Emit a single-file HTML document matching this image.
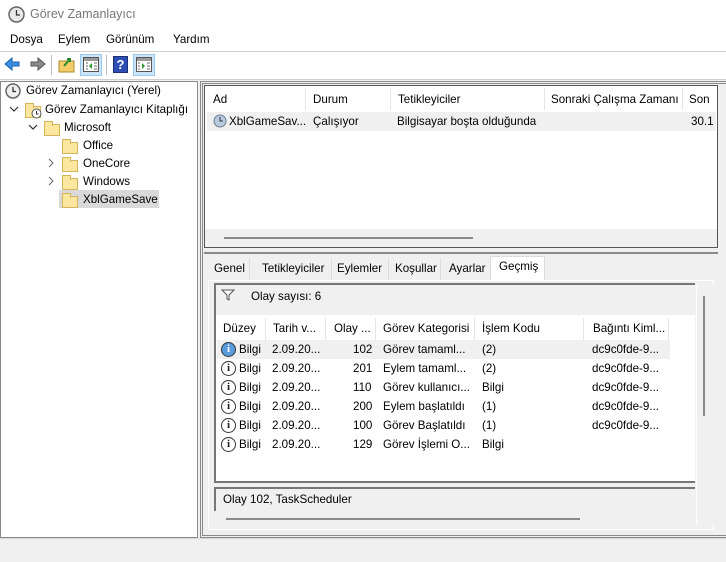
<!DOCTYPE html>
<html><head><meta charset="utf-8"><style>
*{margin:0;padding:0;box-sizing:border-box}
body{width:726px;height:562px;background:#f0f0f0;font-family:"Liberation Sans",sans-serif;font-size:11.6px;color:#000;position:relative;overflow:hidden}
.a{position:absolute;white-space:nowrap}
.fold{position:absolute;width:16px;height:12px;background:#fbe7a0;border:1px solid #d6b45a}
.fold:before{content:"";position:absolute;left:-1px;top:-4px;width:7px;height:4px;background:#fbe7a0;border:1px solid #d6b45a;border-bottom:none}
.info{position:absolute;width:15px;height:15px;border-radius:50%;border:1px solid #333;background:#fff;font:bold 11px "Liberation Serif",serif;text-align:center;line-height:13px;color:#222}
.hd{position:absolute;top:0;height:22px;border-right:1px solid #e5e5e5;overflow:hidden}
</style></head><body>
<div class="a" style="left:0;top:0;width:726px;height:51px;background:#fff"></div>
<svg class="a" style="left:8px;top:6px" width="17" height="17"><circle cx="8.5" cy="8.5" r="7.5" fill="#e8e8e8" stroke="#666" stroke-width="1.5"/><path d="M8.5 4v5h3.5" stroke="#333" stroke-width="1.3" fill="none"/></svg>
<div class="a" style="left:30px;top:7px;color:#777;font-size:12.5px">Görev Zamanlayıcı</div>
<div class="a" style="left:10px;top:33px">Dosya</div>
<div class="a" style="left:58px;top:33px">Eylem</div>
<div class="a" style="left:106px;top:33px">Görünüm</div>
<div class="a" style="left:173px;top:33px">Yardım</div>
<div class="a" style="left:0;top:51px;width:726px;height:1px;background:#d0d0d0"></div>
<div class="a" style="left:0;top:52px;width:726px;height:27px;background:#fff"></div>
<svg class="a" style="left:4px;top:56px" width="42" height="16"><path d="M1 8l7-6v4h7v4h-7v4z" fill="#3a8ee6" stroke="#1d5fa8"/><path d="M41 8l-7-6v4h-7v4h7v4z" fill="#8a8a8a" stroke="#555"/></svg>
<div class="a" style="left:51px;top:55px;width:1px;height:20px;background:#bbb"></div>
<svg class="a" style="left:58px;top:56px" width="18" height="17"><rect x="1" y="5" width="15" height="11" fill="#f2cd6a" stroke="#b08a30"/><path d="M6 10l6-7M9 3h3v3" stroke="#2a8a2a" stroke-width="2" fill="none"/></svg>
<div class="a" style="left:80px;top:54px;width:22px;height:22px;background:#cce4f7;border:1px solid #99c9ef"></div>
<svg class="a" style="left:83px;top:57px" width="16" height="15"><rect x=".5" y=".5" width="15" height="14" fill="#fff" stroke="#555"/><rect x="1" y="1" width="14" height="3" fill="#999"/><path d="M9 6l-3 3 3 3z" fill="#2a9a2a"/><path d="M3 6h2M3 9h2M3 12h2M11 6h3M11 9h3M11 12h3" stroke="#666"/></svg>
<div class="a" style="left:106px;top:55px;width:1px;height:20px;background:#bbb"></div>
<div class="a" style="left:113px;top:56px;width:15px;height:17px;background:#2d4fb3;border:1px solid #1b2f77;color:#fff;font-weight:bold;font-size:13px;text-align:center;line-height:15px">?</div>
<div class="a" style="left:133px;top:54px;width:22px;height:22px;background:#cce4f7;border:1px solid #99c9ef"></div>
<svg class="a" style="left:136px;top:57px" width="16" height="15"><rect x=".5" y=".5" width="15" height="14" fill="#fff" stroke="#555"/><rect x="1" y="1" width="14" height="3" fill="#999"/><path d="M6 6l3 3-3 3z" fill="#2a9a2a"/><path d="M2 6h2M2 9h2M2 12h2M11 6h3M11 9h3M11 12h3" stroke="#666"/></svg>
<div class="a" style="left:0;top:79px;width:726px;height:1px;background:#d0d0d0"></div>
<div class="a" style="left:0;top:81px;width:198px;height:457px;background:#fff;border:1px solid #8a8a8a"></div>
<svg class="a" style="left:5px;top:83px" width="16" height="16"><circle cx="8" cy="8" r="7" fill="#eee" stroke="#666" stroke-width="1.5"/><path d="M8 4v4.5h3" stroke="#333" stroke-width="1.3" fill="none"/></svg>
<div class="a" style="left:26px;top:84px">Görev Zamanlayıcı (Yerel)</div>
<svg class="a" style="left:9px;top:105px" width="10" height="8"><path d="M1 2l4 4 4-4" stroke="#333" fill="none" stroke-width="1.2"/></svg>
<div class="fold" style="left:25px;top:106px"></div>
<svg class="a" style="left:31px;top:108px" width="11" height="11"><circle cx="5.5" cy="5.5" r="4.5" fill="#fff" stroke="#555"/><path d="M5.5 3v3h2" stroke="#333" fill="none"/></svg>
<div class="a" style="left:45px;top:103px">Görev Zamanlayıcı Kitaplığı</div>
<svg class="a" style="left:28px;top:123px" width="10" height="8"><path d="M1 2l4 4 4-4" stroke="#333" fill="none" stroke-width="1.2"/></svg>
<div class="fold" style="left:44px;top:124px"></div>
<div class="a" style="left:64px;top:121px">Microsoft</div>
<div class="fold" style="left:62px;top:142px"></div>
<div class="a" style="left:83px;top:139px">Office</div>
<svg class="a" style="left:47px;top:158px" width="8" height="10"><path d="M2 1l4 4-4 4" stroke="#666" fill="none"/></svg>
<div class="fold" style="left:62px;top:160px"></div>
<div class="a" style="left:83px;top:157px">OneCore</div>
<svg class="a" style="left:47px;top:176px" width="8" height="10"><path d="M2 1l4 4-4 4" stroke="#666" fill="none"/></svg>
<div class="fold" style="left:62px;top:178px"></div>
<div class="a" style="left:83px;top:175px">Windows</div>
<div class="a" style="left:59px;top:190px;width:100px;height:18px;background:#d9d9d9"></div>
<div class="fold" style="left:62px;top:196px"></div>
<div class="a" style="left:83px;top:193px">XblGameSave</div>
<div class="a" style="left:200px;top:81px;width:526px;height:457px;border:3px double #8a8a8a;border-right:none;background:#f0f0f0"></div>
<div class="a" style="left:204px;top:85px;width:514px;height:163px;background:#fff;border:1px solid #555"></div>
<div class="a" style="left:205px;top:88px;width:512px;height:22px">
<div class="hd" style="left:0;width:101px"><span class="a" style="left:8px;top:5px">Ad</span></div>
<div class="hd" style="left:101px;width:85px"><span class="a" style="left:7px;top:5px">Durum</span></div>
<div class="hd" style="left:186px;width:154px"><span class="a" style="left:7px;top:5px">Tetikleyiciler</span></div>
<div class="hd" style="left:340px;width:138px"><span class="a" style="left:6px;top:5px">Sonraki Çalışma Zamanı</span></div>
<div class="hd" style="left:478px;width:40px;border:none"><span class="a" style="left:6px;top:5px">Son</span></div>
</div>
<div class="a" style="left:207px;top:112px;width:509px;height:19px;background:#f0f0f0"></div>
<svg class="a" style="left:213px;top:114px" width="14" height="14"><circle cx="7" cy="7" r="6" fill="#b9cbe0" stroke="#6a7a8a"/><path d="M7 3v4h3" stroke="#333" fill="none"/></svg>
<div class="a" style="left:229px;top:115px">XblGameSav...</div>
<div class="a" style="left:313px;top:115px">Çalışıyor</div>
<div class="a" style="left:397px;top:115px">Bilgisayar boşta olduğunda</div>
<div class="a" style="left:691px;top:115px">30.1</div>
<div class="a" style="left:205px;top:229px;width:512px;height:18px;background:#f0f0f0"></div>
<div class="a" style="left:224px;top:237px;width:249px;height:2px;background:#8a8a8a"></div>
<div class="a" style="left:204px;top:252px;width:514px;height:3px;border-top:2px solid #8a8a8a"></div>
<div class="a" style="left:205px;top:258px;width:45px;height:22px;border-right:1px solid #ddd"><span class="a" style="left:9px;top:4px">Genel</span></div>
<div class="a" style="left:254px;top:258px;width:78px;height:22px;border-right:1px solid #ddd"><span class="a" style="left:8px;top:4px">Tetikleyiciler</span></div>
<div class="a" style="left:332px;top:258px;width:57px;height:22px;border-right:1px solid #ddd"><span class="a" style="left:5px;top:4px">Eylemler</span></div>
<div class="a" style="left:389px;top:258px;width:52px;height:22px;border-right:1px solid #ddd"><span class="a" style="left:6px;top:4px">Koşullar</span></div>
<div class="a" style="left:441px;top:258px;width:50px;height:22px"><span class="a" style="left:8px;top:4px">Ayarlar</span></div>
<div class="a" style="left:490px;top:256px;width:55px;height:24px;background:#fff;border:1px solid #ddd;border-bottom:none"><span class="a" style="left:8px;top:3px">Geçmiş</span></div>
<div class="a" style="left:208px;top:280px;width:506px;height:250px;background:#f0f0f0;border:1px solid #fff"></div>
<div class="a" style="left:214px;top:283px;width:481px;height:200px;border:2px solid #777;border-right:none;background:#fff"></div>
<div class="a" style="left:216px;top:285px;width:479px;height:30px;background:#f0f0f0"></div>
<svg class="a" style="left:221px;top:289px" width="14" height="12"><path d="M1 1h12l-5 5v5l-2-1v-4z" fill="#fff" stroke="#555"/></svg>
<div class="a" style="left:251px;top:290px">Olay sayısı: 6</div>
<div class="a" style="left:216px;top:318px;width:455px;height:22px">
<div class="hd" style="left:0;width:50px"><span class="a" style="left:7px;top:4px">Düzey</span></div>
<div class="hd" style="left:50px;width:60px"><span class="a" style="left:7px;top:4px">Tarih v...</span></div>
<div class="hd" style="left:110px;width:50px"><span class="a" style="left:8px;top:4px">Olay ...</span></div>
<div class="hd" style="left:160px;width:99px"><span class="a" style="left:7px;top:4px">Görev Kategorisi</span></div>
<div class="hd" style="left:259px;width:109px"><span class="a" style="left:7px;top:4px">İşlem Kodu</span></div>
<div class="hd" style="left:368px;width:85px"><span class="a" style="left:9px;top:4px">Bağıntı Kiml...</span></div>
</div>
<div class="a" style="left:217px;top:340px;width:453px;height:19px;background:#f0f0f0"></div>
<div class="info" style="left:221px;top:342px;background:#5a9be0;color:#fff">i</div>
<div class="a" style="left:239px;top:343px">Bilgi</div><div class="a" style="left:272px;top:343px">2.09.20...</div><div class="a" style="left:353px;top:343px">102</div><div class="a" style="left:383px;top:343px">Görev tamaml...</div><div class="a" style="left:482px;top:343px">(2)</div><div class="a" style="left:592px;top:343px">dc9c0fde-9...</div>
<div class="info" style="left:221px;top:361px">i</div>
<div class="a" style="left:239px;top:362px">Bilgi</div><div class="a" style="left:272px;top:362px">2.09.20...</div><div class="a" style="left:353px;top:362px">201</div><div class="a" style="left:383px;top:362px">Eylem tamaml...</div><div class="a" style="left:482px;top:362px">(2)</div><div class="a" style="left:592px;top:362px">dc9c0fde-9...</div>
<div class="info" style="left:221px;top:380px">i</div>
<div class="a" style="left:239px;top:381px">Bilgi</div><div class="a" style="left:272px;top:381px">2.09.20...</div><div class="a" style="left:353px;top:381px">110</div><div class="a" style="left:383px;top:381px">Görev kullanıcı...</div><div class="a" style="left:482px;top:381px">Bilgi</div><div class="a" style="left:592px;top:381px">dc9c0fde-9...</div>
<div class="info" style="left:221px;top:399px">i</div>
<div class="a" style="left:239px;top:400px">Bilgi</div><div class="a" style="left:272px;top:400px">2.09.20...</div><div class="a" style="left:353px;top:400px">200</div><div class="a" style="left:383px;top:400px">Eylem başlatıldı</div><div class="a" style="left:482px;top:400px">(1)</div><div class="a" style="left:592px;top:400px">dc9c0fde-9...</div>
<div class="info" style="left:221px;top:418px">i</div>
<div class="a" style="left:239px;top:419px">Bilgi</div><div class="a" style="left:272px;top:419px">2.09.20...</div><div class="a" style="left:353px;top:419px">100</div><div class="a" style="left:383px;top:419px">Görev Başlatıldı</div><div class="a" style="left:482px;top:419px">(1)</div><div class="a" style="left:592px;top:419px">dc9c0fde-9...</div>
<div class="info" style="left:221px;top:437px">i</div>
<div class="a" style="left:239px;top:438px">Bilgi</div><div class="a" style="left:272px;top:438px">2.09.20...</div><div class="a" style="left:353px;top:438px">129</div><div class="a" style="left:383px;top:438px">Görev İşlemi O...</div><div class="a" style="left:482px;top:438px">Bilgi</div>
<div class="a" style="left:214px;top:487px;width:481px;height:24px;border-top:2px solid #777;border-left:2px solid #777;background:#f0f0f0"></div>
<div class="a" style="left:223px;top:493px">Olay 102, TaskScheduler</div>
<div class="a" style="left:226px;top:518px;width:354px;height:2px;background:#8a8a8a"></div>
<div class="a" style="left:696px;top:285px;width:18px;height:240px;background:#f0f0f0;border-left:1px solid #fff"></div>
<div class="a" style="left:703px;top:296px;width:2px;height:120px;background:#8a8a8a"></div>
<div class="a" style="left:0;top:538px;width:726px;height:1px;background:#d8d8d8"></div>
</body></html>
